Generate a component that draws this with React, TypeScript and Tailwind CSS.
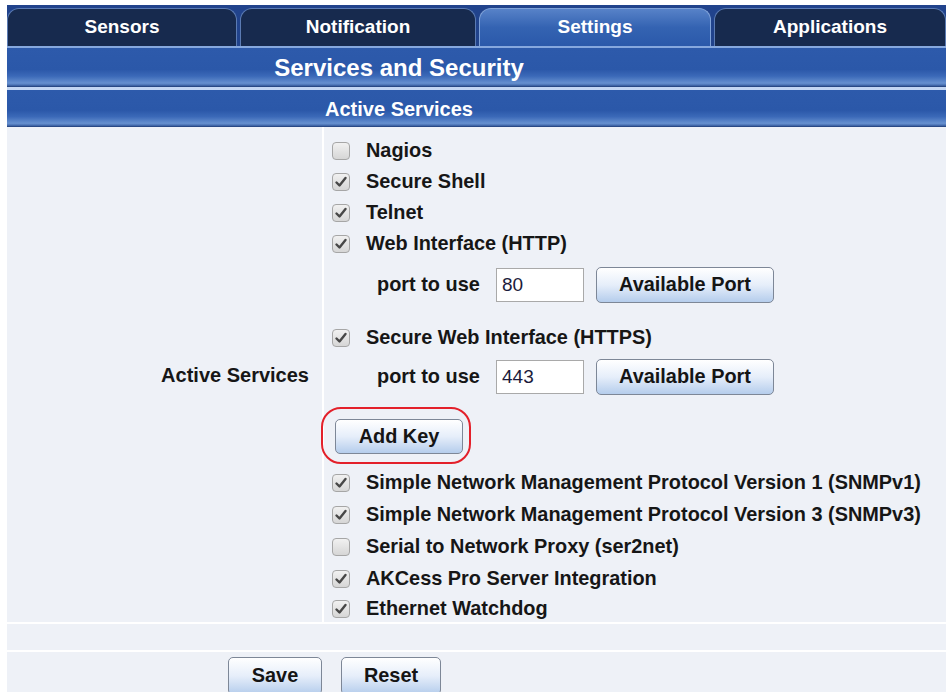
import type { ReactNode } from 'react'

const TABS = [
  { label: 'Sensors', active: false },
  { label: 'Notification', active: false },
  { label: 'Settings', active: true },
  { label: 'Applications', active: false },
]

function Check({ checked }: { checked: boolean }) {
  return (
    <span className="flex h-[18px] w-[18px] shrink-0 items-center justify-center rounded-[4px] border border-[#a6a6a6] bg-gradient-to-b from-[#f1f1f1] to-[#d6d6d6]">
      {checked && (
        <svg width="14" height="14" viewBox="0 0 14 14">
          <path d="M2.5 7.5 L5.5 10.5 L11.5 3" fill="none" stroke="#474747" strokeWidth="2.4" strokeLinecap="round" strokeLinejoin="round" />
        </svg>
      )}
    </span>
  )
}

function Btn({ children, className = '' }: { children: ReactNode; className?: string }) {
  return (
    <button className={`flex items-center justify-center rounded-[5px] border border-[#7d8797] bg-gradient-to-b from-[#ffffff] via-[#e6eefa] to-[#b5cdec] font-bold text-[#151515] ${className}`}>
      {children}
    </button>
  )
}

function ServiceRow({ label, checked, className = '' }: { label: string; checked: boolean; className?: string }) {
  return (
    <div className={`flex items-center gap-[16px] ${className}`}>
      <Check checked={checked} />
      <span>{label}</span>
    </div>
  )
}

function PortRow({ value, className = '' }: { value: string; className?: string }) {
  return (
    <div className={`flex h-[36px] items-center pl-[45px] ${className}`}>
      <span className="w-[119px]">port to use</span>
      <input
        readOnly
        value={value}
        className="h-[34px] w-[88px] border border-[#a9a9a9] bg-white px-[5px] text-[19px] font-normal text-[#1b1b3b] outline-none"
      />
      <Btn className="ml-[12px] h-[36px] w-[178px]">Available Port</Btn>
    </div>
  )
}

export default function App() {
  return (
    <div className="min-h-screen bg-white pl-[7px] pt-[5px] font-['Liberation_Sans',Arial,sans-serif] text-[#161616]">
      {/* tab strip */}
      <div className="grid h-[41px] grid-cols-[230px_236px_232px_1fr] gap-[3px] bg-[#21438c] pt-[3px]">
        {TABS.map(t => (
          <div
            key={t.label}
            className={`flex items-center justify-center rounded-t-[12px] border border-b-0 text-[19px] font-bold text-white ${
              t.active
                ? 'border-[#7fa2d8] bg-gradient-to-b from-[#5782c8] via-[#3463b2] to-[#2b59aa]'
                : 'border-[#5b7bb3] bg-[#172a4e]'
            }`}
          >
            {t.label}
          </div>
        ))}
      </div>

      {/* section header */}
      <div className="h-[41px] border-t-[2px] border-[#86a8de] bg-[linear-gradient(to_bottom,#2d5aab_0%,#2b58a9_55%,#3b69b8_72%,#6690cf_90%,#4a72b4_95%,#1d3a74_100%)]">
        <div className="flex h-full w-[784px] items-center justify-center text-[24px] font-bold text-white">Services and Security</div>
      </div>
      <div className="h-[3px] bg-[#c3d6f2]" />
      <div className="h-[37px] bg-[linear-gradient(to_bottom,#2d5aab_0%,#2b58a9_55%,#3b69b8_72%,#6690cf_90%,#4a72b4_95%,#1d3a74_100%)]">
        <div className="flex h-full w-[784px] items-center justify-center text-[20px] font-bold text-white">Active Services</div>
      </div>

      {/* services table */}
      <div className="bg-[#eef1f7] text-[19.9px] font-bold">
        <div className="flex border-b-2 border-white">
          <div className="flex w-[317px] items-center justify-end border-r-2 border-white pr-[13px] text-[20px]">Active Services</div>
          <div className="flex flex-col pl-[8px] pt-[8px]">
            <ServiceRow label="Nagios" checked={false} className="h-[31px]" />
            <ServiceRow label="Secure Shell" checked className="h-[31px]" />
            <ServiceRow label="Telnet" checked className="h-[31px]" />
            <ServiceRow label="Web Interface (HTTP)" checked className="h-[31px]" />
            <PortRow value="80" className="mt-[8px]" />
            <ServiceRow label="Secure Web Interface (HTTPS)" checked className="mt-[19px] h-[31px]" />
            <PortRow value="443" className="mt-[6px]" />
            <div className="relative mt-[24px] w-fit pl-[3px]">
              <Btn className="h-[35px] w-[128px]">Add Key</Btn>
              <div className="pointer-events-none absolute left-[-11px] top-[-12px] h-[57px] w-[150px] rounded-[20px] border-[2.5px] border-[#e3202a]" />
            </div>
            <ServiceRow label="Simple Network Management Protocol Version 1 (SNMPv1)" checked className="mt-[13px] h-[32px]" />
            <ServiceRow label="Simple Network Management Protocol Version 3 (SNMPv3)" checked className="h-[32px]" />
            <ServiceRow label="Serial to Network Proxy (ser2net)" checked={false} className="h-[32px]" />
            <ServiceRow label="AKCess Pro Server Integration" checked className="h-[32px]" />
            <ServiceRow label="Ethernet Watchdog" checked className="h-[27px]" />
          </div>
        </div>
        <div className="h-[28px] border-b-2 border-white" />
        <div className="flex h-[50px] items-start gap-[19px] pl-[221px] pt-[5px]">
          <Btn className="h-[38px] w-[94px]">Save</Btn>
          <Btn className="h-[38px] w-[100px]">Reset</Btn>
        </div>
      </div>
    </div>
  )
}
